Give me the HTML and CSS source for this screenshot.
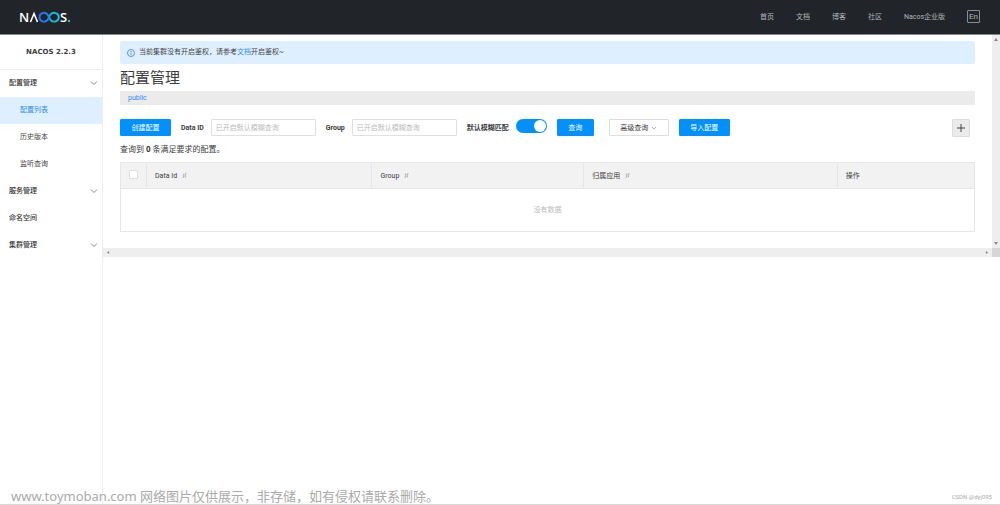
FILE: index.html
```html
<!DOCTYPE html>
<html lang="zh-CN">
<head>
<meta charset="utf-8">
<meta name="viewport" content="width=device-width, initial-scale=1">
<title>Nacos</title>
<link rel="stylesheet" href="styles.css">
</head>
<body>
<header class="topbar">
  <svg class="logo" width="54" height="16" viewBox="0 0 54 16" role="img" aria-label="NACOS">
    <defs>
      <linearGradient id="loop" gradientUnits="userSpaceOnUse" x1="20" x2="41" y1="0" y2="0">
        <stop offset="0" stop-color="#2a6ff5"/>
        <stop offset="0.45" stop-color="#1c86f0"/>
        <stop offset="0.6" stop-color="#14bcdc"/>
        <stop offset="1" stop-color="#14c4dc"/>
      </linearGradient>
    </defs>
    <text class="logo-text" x="0" y="13">N</text>
    <path d="M11.500 13 L15 4.500 L18.500 13" fill="none" stroke="#fff" stroke-width="1.600"/>
    <path d="M28.500 5.500 C25.500 2.300 20.500 4 20.500 8.200 C20.500 12.500 25.500 14 28.500 11 C29.500 10 30.500 6.500 31.500 5.500 C34.500 2.300 39.800 4 39.800 8.200 C39.800 12.500 34.500 14 31.500 11 L28.500 5.500" fill="none" stroke="url(#loop)" stroke-width="1.900"/>
    <text class="logo-text" x="41" y="13">S</text>
    <circle cx="50" cy="12" r="1.200" fill="#14c4dc"/>
  </svg>
  <nav class="topnav">
    <a href="#">首页</a>
    <a href="#">文档</a>
    <a href="#">博客</a>
    <a href="#">社区</a>
    <a href="#">Nacos企业版</a>
    <button class="lang" type="button">En</button>
  </nav>
</header>

<div class="layout">
  <aside class="sidebar">
    <div class="version">NACOS 2.2.3</div>
    <nav class="menu">
      <a class="item strong" href="#">配置管理<svg class="chevron" viewBox="0 0 8 6"><path d="M1 1.500 L4 4.500 L7 1.500"/></svg></a>
      <a class="item sub active" href="#">配置列表</a>
      <a class="item sub" href="#">历史版本</a>
      <a class="item sub" href="#">监听查询</a>
      <a class="item strong" href="#">服务管理<svg class="chevron" viewBox="0 0 8 6"><path d="M1 1.500 L4 4.500 L7 1.500"/></svg></a>
      <a class="item strong" href="#">命名空间</a>
      <a class="item strong" href="#">集群管理<svg class="chevron" viewBox="0 0 8 6"><path d="M1 1.500 L4 4.500 L7 1.500"/></svg></a>
    </nav>
  </aside>

  <div class="viewport">
    <main class="content">
      <div class="notice">
        <svg class="info" viewBox="0 0 8 8"><circle cx="4" cy="4" r="3.500"/><path d="M4 3.500 V6 M4 2 V3"/></svg>
        <p>当前集群没有开启鉴权，请参考<a href="#">文档</a>开启鉴权~</p>
      </div>
      <h1>配置管理</h1>
      <div class="namespace"><a href="#">public</a></div>

      <form class="toolbar">
        <button class="btn primary" type="button">创建配置</button>
        <div class="field"><label for="data-id">Data ID</label><input id="data-id" type="text" placeholder="已开启默认模糊查询"></div>
        <div class="field"><label for="group">Group</label><input id="group" type="text" placeholder="已开启默认模糊查询"></div>
        <div class="field fuzzy"><label for="fuzzy">默认模糊匹配</label><input id="fuzzy" class="switch" type="checkbox" checked></div>
        <button class="btn primary query" type="button">查询</button>
        <button class="btn advanced" type="button">高级查询<svg class="caret" viewBox="0 0 8 6"><path d="M1 1.500 L4 4.500 L7 1.500"/></svg></button>
        <button class="btn primary" type="button">导入配置</button>
        <button class="btn add" type="button" aria-label="新建"><svg viewBox="0 0 8 8"><path d="M4 0 V8 M0 4 H8"/></svg></button>
      </form>

      <p class="summary">查询到 <strong>0</strong> 条满足要求的配置。</p>

      <table class="grid">
        <colgroup><col class="c-check"><col class="c-id"><col class="c-group"><col class="c-app"><col></colgroup>
        <thead>
          <tr>
            <th class="check"><input type="checkbox" aria-label="全选"></th>
            <th>Data Id<svg class="sort" viewBox="0 0 6 6"><path d="M0.500 5.500 H1.500 L2.500 1 L1 2 M5.500 0.500 H4.500 L3.500 5 L5 4"/></svg></th>
            <th>Group<svg class="sort" viewBox="0 0 6 6"><path d="M0.500 5.500 H1.500 L2.500 1 L1 2 M5.500 0.500 H4.500 L3.500 5 L5 4"/></svg></th>
            <th>归属应用<svg class="sort" viewBox="0 0 6 6"><path d="M0.500 5.500 H1.500 L2.500 1 L1 2 M5.500 0.500 H4.500 L3.500 5 L5 4"/></svg></th>
            <th>操作</th>
          </tr>
        </thead>
        <tbody><tr><td class="empty" colspan="5">没有数据</td></tr></tbody>
      </table>
    </main>
    <div class="bar vertical"><svg viewBox="0 0 4 3"><path d="M0 3 L2 0 L4 3 Z"/></svg><svg viewBox="0 0 4 3"><path d="M0 0 L2 3 L4 0 Z"/></svg></div>
    <div class="bar horizontal"><svg viewBox="0 0 3 4"><path d="M3 0 L0 2 L3 4 Z"/></svg><svg viewBox="0 0 3 4"><path d="M0 0 L3 2 L0 4 Z"/></svg></div>
    <div class="corner"></div>
  </div>
</div>

<div class="watermark">www.toymoban.com 网络图片仅供展示，非存储，如有侵权请联系删除。</div>
<div class="credit">CSDN @dyj095</div>
</body>
</html>
```

FILE: styles.css
```css
* {
  box-sizing: border-box;
}

body {
  margin: 0;
  min-height: 100vh;
  display: flex;
  flex-direction: column;
  position: relative;
  border-bottom: 1px solid #d8d8d8;
  background: #fff;
  color: #3c3c3c;
  font: 7px/12px Roboto, "Noto Sans CJK SC", sans-serif;
}

a {
  color: #2b8cf5;
  text-decoration: none;
}

button,
input {
  font: inherit;
  color: inherit;
  margin: 0;
}

h1,
p {
  margin: 0;
}

svg {
  display: block;
  fill: none;
  stroke: none;
}

.topbar {
  display: flex;
  align-items: center;
  justify-content: space-between;
  height: 35px;
  padding: 0 20px 1px 19px;
  background: #212529;
  border-bottom: 1px solid #85888a;
}

.logo-text {
  fill: #fff;
  font: 600 13px "Open Sans", sans-serif;
}

.topnav {
  display: flex;
  align-items: center;
  gap: 22px;
}

.topnav a {
  color: #b4b6b8;
}

.lang {
  width: 13px;
  height: 13px;
  padding: 0;
  border: 1px solid #8b8e91;
  border-radius: 1px;
  background: none;
  color: #b4b6b8;
  font-size: 8px;
  line-height: 10px;
}

.layout {
  flex: 1;
  display: flex;
}

.sidebar {
  flex: none;
  width: 103px;
  border-right: 1px solid #eee;
}

.version {
  height: 35px;
  border-bottom: 1px solid #eee;
  text-align: center;
  font: bold 7px/34px "DejaVu Sans", sans-serif;
}

.item {
  display: flex;
  align-items: center;
  justify-content: space-between;
  height: 27px;
  padding: 0 4px 1px 9px;
  color: #444;
}

.strong {
  color: #333;
  font-weight: 500;
}

.sub {
  padding-left: 20px;
}

.active {
  background: #def0ff;
  color: #2b8cf5;
}

.chevron {
  width: 8px;
  height: 6px;
  stroke: #888;
}

.viewport {
  flex: 1;
  min-width: 0;
  align-self: flex-start;
  display: grid;
  grid-template-columns: 1fr 8px;
  grid-template-rows: auto 9px;
}

.content {
  min-width: 0;
  padding: 6px 17px 16px;
}

.notice {
  display: flex;
  align-items: center;
  gap: 4px;
  height: 23px;
  padding: 0 7px;
  border-radius: 2px;
  background: #def0ff;
  color: #444;
}

.notice p {
  padding-bottom: 2px;
}

.info {
  width: 8px;
  height: 8px;
  stroke: #5c8cff;
}

h1 {
  padding: 2px 0 1px;
  font-size: 15px;
  line-height: 24px;
  font-weight: 400;
}

.namespace {
  height: 14px;
  padding-left: 8px;
  background: #ebebeb;
  line-height: 14px;
}

.toolbar {
  display: flex;
  align-items: flex-start;
  gap: 10px;
  margin: 14px 5px 0 0;
}

.field {
  display: flex;
  align-items: center;
  gap: 7px;
  font-weight: 700;
}

.fuzzy {
  height: 17px;
}

.field input[type="text"] {
  width: 105px;
  height: 17px;
  padding: 0 4px;
  border: 1px solid #e0e0e0;
  border-radius: 1px;
  background: #fff;
  font-weight: 400;
}

.field ::placeholder {
  color: #bbb;
}

.switch {
  appearance: none;
  width: 31px;
  height: 14px;
  margin-bottom: 3px;
  padding: 1px;
  border-radius: 7px;
  background: #0090ff;
}

.switch::before {
  content: "";
  display: block;
  width: 12px;
  height: 12px;
  margin-left: auto;
  border-radius: 50%;
  background: #fff;
}

.btn {
  display: flex;
  align-items: center;
  justify-content: center;
  min-width: 51px;
  height: 17px;
  padding: 0 8px;
  border: 1px solid #ddd;
  border-radius: 1px;
  background: #fff;
}

.primary {
  border-color: #0090ff;
  background: #0090ff;
  color: #fff;
}

.query {
  min-width: 37px;
  margin-right: 5px;
}

.advanced {
  gap: 3px;
  min-width: 60px;
}

.caret {
  width: 6px;
  height: 4px;
  stroke: #888;
}

.add {
  min-width: 18px;
  height: 18px;
  margin-left: auto;
  padding: 0;
  border-color: #ddd;
  background: #ebebeb;
}

.add svg {
  width: 8px;
  height: 8px;
  stroke: #444;
}

.summary {
  padding: 6px 0;
  font-size: 8px;
}

.summary strong {
  font-family: "Open Sans", sans-serif;
}

.grid {
  width: 100%;
  table-layout: fixed;
  border-collapse: collapse;
  border: 1px solid #e6e6e6;
}

.c-check {
  width: 26px;
}

.c-id {
  width: 26.4%;
}

.c-group {
  width: 24.8%;
}

.c-app {
  width: 29.7%;
}

.grid th {
  height: 26px;
  padding: 0 8px;
  border: 1px solid #e6e6e6;
  background: #f2f2f2;
  text-align: left;
  font-weight: 400;
}

.grid .check {
  padding: 0;
}

.check input {
  appearance: none;
  display: block;
  width: 9px;
  height: 9px;
  margin: 0 auto 2px;
  border: 1px solid #ddd;
  border-radius: 1px;
  background: #fff;
}

.sort {
  display: inline-block;
  width: 5px;
  height: 5px;
  margin-left: 5px;
  stroke: #aaa;
}

.empty {
  height: 43px;
  padding: 0;
  color: #bbb;
  text-align: center;
}

.bar {
  display: flex;
  align-items: center;
  justify-content: space-between;
  background: #eee;
}

.bar svg {
  width: 4px;
  height: 3px;
  fill: #888;
}

.vertical {
  flex-direction: column;
  padding: 3px 0;
}

.horizontal {
  padding: 0 3px;
}

.corner {
  background: #d6d6d6;
}

.watermark {
  position: absolute;
  left: 11px;
  bottom: -2px;
  color: #aaa;
  font: 13px/20px "Noto Sans", "Noto Sans CJK SC", sans-serif;
}

.credit {
  position: absolute;
  right: 8px;
  bottom: 1px;
  color: #aaa;
  font-size: 6px;
}
```
